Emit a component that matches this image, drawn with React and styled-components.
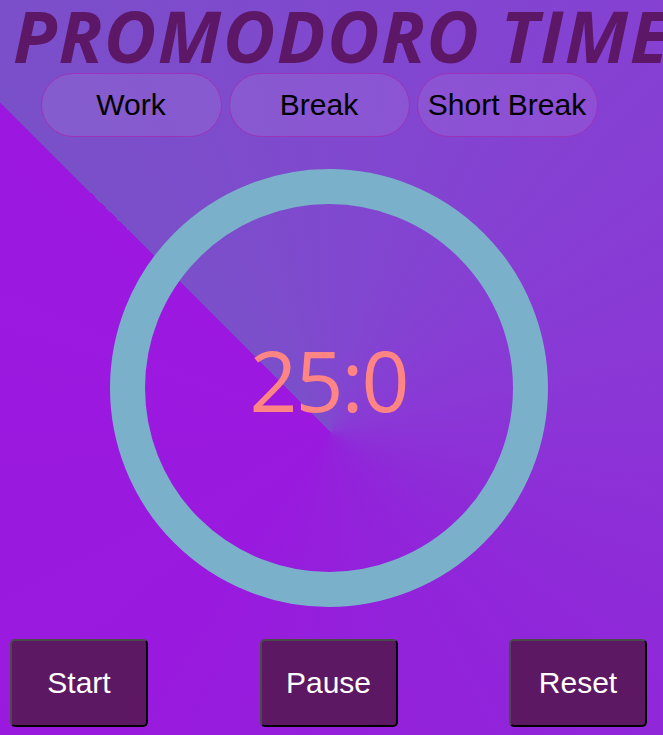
import React, { useState } from 'react';
import styled, { createGlobalStyle } from 'styled-components';

const GlobalStyle = createGlobalStyle`
  html, body {
    margin: 0;
    padding: 0;
  }
  body {
    font-family: 'Liberation Sans', Arial, sans-serif;
  }
`;

const Page = styled.div`
  width: 663px;
  height: 735px;
  overflow: hidden;
  display: flex;
  flex-direction: column;
  align-items: center;
  background: conic-gradient(
    from 315deg at 330px 432px,
    #7a50c9 0deg,
    #8246d0 60deg,
    #8a38d6 120deg,
    #9026d9 180deg,
    #991ade 260deg,
    #9c18e0 360deg
  );
`;

const Title = styled.h1`
  align-self: flex-start;
  margin: 0;
  padding-left: 13px;
  font-family: 'Open Sans', 'Noto Sans', sans-serif;
  font-style: italic;
  font-weight: 700;
  font-size: 72px;
  line-height: 70px;
  letter-spacing: 1.5px;
  color: #5c1867;
  white-space: nowrap;
`;

const Tabs = styled.div`
  display: flex;
  gap: 7px;
  margin-top: 3px;
  margin-left: -25px;
`;

const Tab = styled.button`
  width: 181px;
  height: 64px;
  border-radius: 32px;
  border: 1px solid #9a34b8;
  background: rgba(255, 255, 255, 0.08);
  color: #000;
  font-family: 'Liberation Sans', Arial, sans-serif;
  font-size: 30px;
  padding: 0;
  cursor: pointer;
`;

const Dial = styled.div`
  width: 438px;
  height: 438px;
  box-sizing: border-box;
  margin-top: 32px;
  margin-left: -6px;
  border-radius: 50%;
  border: 35px solid #7bb0cb;
  display: flex;
  align-items: center;
  justify-content: center;
`;

const Time = styled.span`
  font-family: 'Open Sans', 'Noto Sans', sans-serif;
  font-size: 84px;
  letter-spacing: -2px;
  color: #ff8585;
  margin-top: -18px;
`;

const Controls = styled.div`
  align-self: stretch;
  display: flex;
  justify-content: space-between;
  padding: 0 16px 0 10px;
  margin-top: 32px;
`;

const ControlButton = styled.button`
  width: 138px;
  height: 88px;
  border-radius: 5px;
  border-width: 2px;
  border-style: solid;
  border-color: #4a4a4a #000 #000 #4a4a4a;
  background: #5c1862;
  color: #fff;
  font-family: 'Liberation Sans', Arial, sans-serif;
  font-size: 30px;
  cursor: pointer;
`;

export default function App() {
  const [minutes] = useState(25);
  const [seconds] = useState(0);

  return (
    <>
      <GlobalStyle />
      <Page>
        <Title>PROMODORO TIMER</Title>
        <Tabs>
          <Tab>Work</Tab>
          <Tab>Break</Tab>
          <Tab>Short Break</Tab>
        </Tabs>
        <Dial>
          <Time>
            {minutes}:{seconds}
          </Time>
        </Dial>
        <Controls>
          <ControlButton>Start</ControlButton>
          <ControlButton>Pause</ControlButton>
          <ControlButton>Reset</ControlButton>
        </Controls>
      </Page>
    </>
  );
}
